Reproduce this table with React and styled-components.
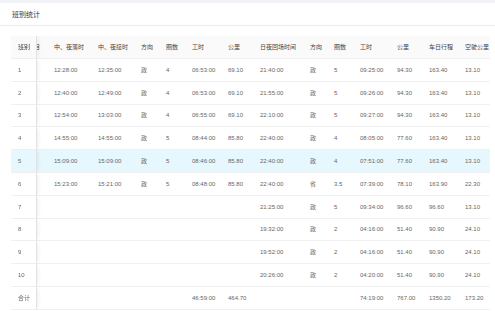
import styled, { createGlobalStyle } from "styled-components";

const GlobalStyle = createGlobalStyle`
  html, body {
    margin: 0;
    padding: 0;
    background: #f0f2f5;
  }
  body {
    font-family: "Liberation Sans", "Noto Sans CJK SC", sans-serif;
    -webkit-font-smoothing: antialiased;
  }
`;

const Page = styled.div`
  padding-top: 3px;
  width: 495px;
  height: 311px;
  box-sizing: border-box;
  overflow: hidden;
`;

const Card = styled.section`
  background: #fff;
  height: 308px;
`;

const CardHeader = styled.div`
  height: 22px;
  display: flex;
  align-items: center;
  padding-left: 12px;
  border-bottom: 1px solid #ececec;
  font-family: "Noto Sans CJK SC", sans-serif;
  font-size: 7px;
  color: #333;
`;

const CardBody = styled.div`
  padding: 10px 5px 0 11px;
`;

const Scroller = styled.div`
  width: 479px;
  overflow: hidden;
`;

const Table = styled.table`
  border-collapse: separate;
  border-spacing: 0;
  table-layout: fixed;
  width: 520px;
  font-size: 6px;
  line-height: 1;
`;

const Th = styled.th`
  height: 23px;
  padding: 0 0 0 7px;
  text-align: left;
  font-family: "Noto Sans CJK SC", sans-serif;
  font-weight: normal;
  color: #444;
  background: #fafafa;
  border-bottom: 1px solid #f0f0f0;
  white-space: nowrap;
  overflow: hidden;
  box-sizing: border-box;
`;

const Td = styled.td`
  height: 22.8px;
  padding: 0 0 0 7px;
  color: #666;
  border-bottom: 1px solid #f0f0f0;
  background: ${(p) => (p.$active ? "#e6f7fe" : "#fff")};
  white-space: nowrap;
  overflow: hidden;
  box-sizing: border-box;
`;

const fixedCell = `
  position: sticky;
  left: 0;
  z-index: 2;
  border-right: 1px solid #e2e2e2;
  box-shadow: 3px 0 4px -2px rgba(0, 0, 0, 0.08);
`;

const FixedTh = styled(Th)`
  ${fixedCell}
`;

const FixedTd = styled(Td)`
  ${fixedCell}
`;

const HiddenTh = styled(Th)`
  padding: 0;
`;

const HiddenTd = styled(Td)`
  padding: 0;
`;

const Clipped = styled.span`
  display: inline-block;
  margin-left: -3px;
`;

const widths = [26, 10, 44, 43, 25, 26, 36, 32, 50, 24, 26, 37, 32, 36, 73];

const heads = [
  "中、夜落时",
  "中、夜接时",
  "方向",
  "圈数",
  "工时",
  "公里",
  "日夜回场时间",
  "方向",
  "圈数",
  "工时",
  "公里",
  "车日行程",
  "空驶公里",
];

const e = ["", "", "", "", "", ""];

const rows = [
  ["1", "12:28:00", "12:35:00", "政", "4", "06:53:00", "69.10", "21:40:00", "政", "5", "09:25:00", "94.30", "163.40", "13.10"],
  ["2", "12:40:00", "12:49:00", "政", "4", "06:53:00", "69.10", "21:55:00", "政", "5", "09:26:00", "94.30", "163.40", "13.10"],
  ["3", "12:54:00", "13:03:00", "政", "4", "06:55:00", "69.10", "22:10:00", "政", "5", "09:27:00", "94.30", "163.40", "13.10"],
  ["4", "14:55:00", "14:55:00", "政", "5", "08:44:00", "85.80", "22:40:00", "政", "4", "08:05:00", "77.60", "163.40", "13.10"],
  ["5", "15:09:00", "15:09:00", "政", "5", "08:46:00", "85.80", "22:40:00", "政", "4", "07:51:00", "77.60", "163.40", "13.10"],
  ["6", "15:23:00", "15:21:00", "政", "5", "08:48:00", "85.80", "22:40:00", "省", "3.5", "07:39:00", "78.10", "163.90", "22.30"],
  ["7", ...e, "21:25:00", "政", "5", "09:34:00", "96.60", "96.60", "13.10"],
  ["8", ...e, "19:32:00", "政", "2", "04:16:00", "51.40", "90.90", "24.10"],
  ["9", ...e, "19:52:00", "政", "2", "04:16:00", "51.40", "90.90", "24.10"],
  ["10", ...e, "20:26:00", "政", "2", "04:20:00", "51.40", "90.90", "24.10"],
  ["合计", "", "", "", "", "46:59:00", "464.70", "", "", "", "74:19:00", "767.00", "1350.20", "173.20"],
];

export default function App() {
  return (
    <>
      <GlobalStyle />
      <Page lang="zh-CN">
        <Card>
          <CardHeader>班别统计</CardHeader>
          <CardBody>
            <Scroller>
              <Table>
                <colgroup>
                  {widths.map((w, i) => (
                    <col key={i} style={{ width: w }} />
                  ))}
                </colgroup>
                <thead>
                  <tr>
                    <FixedTh>班别</FixedTh>
                    <HiddenTh>
                      <Clipped>目</Clipped>
                    </HiddenTh>
                    {heads.map((h, i) => (
                      <Th key={i}>{h}</Th>
                    ))}
                  </tr>
                </thead>
                <tbody>
                  {rows.map((r, ri) => {
                    const active = ri === 4;
                    return (
                      <tr key={ri}>
                        <FixedTd $active={active}>{r[0]}</FixedTd>
                        <HiddenTd $active={active} />
                        {r.slice(1).map((c, ci) => (
                          <Td key={ci} $active={active}>
                            {c}
                          </Td>
                        ))}
                      </tr>
                    );
                  })}
                </tbody>
              </Table>
            </Scroller>
          </CardBody>
        </Card>
      </Page>
    </>
  );
}
